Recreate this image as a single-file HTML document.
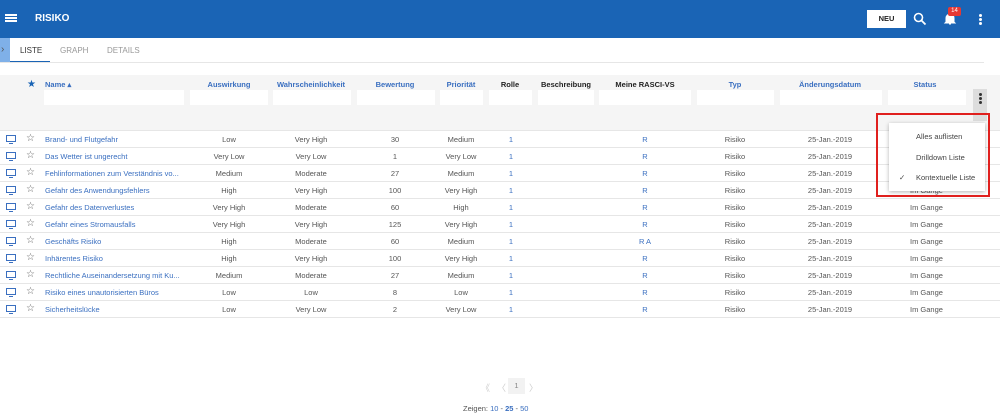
<!DOCTYPE html><html><head><style>
*{box-sizing:border-box;margin:0;padding:0}
body{width:1000px;height:417px;overflow:hidden;background:#fff;font-family:"Liberation Sans",sans-serif;font-size:7.5px;color:#555;position:relative}
.a{position:absolute}
.hdr{left:0;top:0;width:1000px;height:38px;background:#1a64b5}
.th{top:80px;font-weight:bold;font-size:7.5px;color:#3a6fc0;transform:translateX(-50%);white-space:nowrap}
.th.k{color:#222}
.in{top:90px;height:15px;background:#fff}
.row{left:0;width:1000px;height:17px;border-bottom:1px solid #e6e6e6}
.c{position:absolute;top:4px;transform:translateX(-50%);white-space:nowrap}
.b{color:#3a6fc0}
</style></head><body>
<div class="a hdr"></div>
<div class="a" style="left:5px;top:14px;width:12px;height:2px;background:#fff;box-shadow:0 3px 0 #fff,0 6px 0 #fff"></div>
<div class="a" style="left:35px;top:13px;color:#fff;font-weight:bold;font-size:10px">RISIKO</div>
<div class="a" style="left:867px;top:10px;width:39px;height:18px;background:#fff;color:#222;font-weight:bold;font-size:7.5px;text-align:center;line-height:18px">NEU</div>
<svg class="a" style="left:913px;top:12px" width="14" height="14" viewBox="0 0 14 14"><circle cx="5.5" cy="5.5" r="4" fill="none" stroke="#fff" stroke-width="1.6"/><path d="M8.5 8.5L12.5 12.5" stroke="#fff" stroke-width="1.8"/></svg>
<svg class="a" style="left:943px;top:12px" width="14" height="14" viewBox="0 0 14 14"><path d="M3 10V6a4 4 0 0 1 8 0v4l1 1H2z M6 12h2" fill="#fff" stroke="#fff"/></svg>
<div class="a" style="left:948px;top:7px;width:13px;height:9px;background:#e53935;color:#fff;font-size:6px;text-align:center;line-height:9px;border-radius:2px">14</div>
<div class="a" style="left:979px;top:14px;width:3px;height:3px;background:#fff;border-radius:50%;box-shadow:0 4px 0 #fff,0 8px 0 #fff"></div>
<div class="a" style="left:0;top:38px;width:10px;height:24px;background:#7fb0e8"></div>
<div class="a" style="left:1px;top:44px;color:#555;font-size:10px">›</div>
<div class="a" style="left:20px;top:46px;color:#333;font-size:8px">LISTE</div>
<div class="a" style="left:10px;top:61px;width:40px;height:2px;background:#1a64b5"></div>
<div class="a" style="left:60px;top:46px;color:#999;font-size:8px">GRAPH</div>
<div class="a" style="left:107px;top:46px;color:#999;font-size:8px">DETAILS</div>
<div class="a" style="left:0;top:62px;width:984px;height:1px;background:#e6e6e6"></div>
<div class="a" style="left:0;top:75px;width:1000px;height:55px;background:#f5f5f5"></div>
<div class="a" style="left:27px;top:79px;color:#1a64b5;font-size:10px">★</div>
<div class="a th" style="left:45px;transform:none">Name ▴</div>
<div class="a th" style="left:229px">Auswirkung</div>
<div class="a th" style="left:311px">Wahrscheinlichkeit</div>
<div class="a th" style="left:395px">Bewertung</div>
<div class="a th" style="left:461px">Priorität</div>
<div class="a th k" style="left:510px">Rolle</div>
<div class="a th k" style="left:566px">Beschreibung</div>
<div class="a th k" style="left:645px">Meine RASCI-VS</div>
<div class="a th" style="left:735px">Typ</div>
<div class="a th" style="left:830px">Änderungsdatum</div>
<div class="a th" style="left:925px">Status</div>
<div class="a in" style="left:44px;width:140px"></div><div class="a in" style="left:190px;width:78px"></div><div class="a in" style="left:273px;width:78px"></div><div class="a in" style="left:357px;width:78px"></div><div class="a in" style="left:440px;width:43px"></div><div class="a in" style="left:489px;width:43px"></div><div class="a in" style="left:538px;width:56px"></div><div class="a in" style="left:599px;width:92px"></div><div class="a in" style="left:697px;width:77px"></div><div class="a in" style="left:780px;width:102px"></div><div class="a in" style="left:888px;width:78px"></div>
<div class="a" style="left:973px;top:89px;width:14px;height:32px;background:#ddd"></div>
<div class="a" style="left:979px;top:93px;width:3px;height:3px;background:#333;border-radius:50%;box-shadow:0 4px 0 #333,0 8px 0 #333"></div>
<div class="a" style="left:0;top:130px;width:1000px;height:1px;background:#e6e6e6"></div>
<div id="rows"></div>
<script>
var d=[["Brand- und Flutgefahr","Low","Very High","30","Medium","R"],["Das Wetter ist ungerecht","Very Low","Very Low","1","Very Low","R"],["Fehlinformationen zum Verständnis vo...","Medium","Moderate","27","Medium","R"],["Gefahr des Anwendungsfehlers","High","Very High","100","Very High","R"],["Gefahr des Datenverlustes","Very High","Moderate","60","High","R"],["Gefahr eines Stromausfalls","Very High","Very High","125","Very High","R"],["Geschäfts Risiko","High","Moderate","60","Medium","R A"],["Inhärentes Risiko","High","Very High","100","Very High","R"],["Rechtliche Auseinandersetzung mit Ku...","Medium","Moderate","27","Medium","R"],["Risiko eines unautorisierten Büros","Low","Low","8","Low","R"],["Sicherheitslücke","Low","Very Low","2","Very Low","R"]];
var h="";d.forEach(function(r,i){var t=131+i*17;h+='<div class="a row" style="top:'+t+'px">'+
'<svg class="a" style="left:6px;top:4px" width="10" height="9" viewBox="0 0 10 9"><rect x="0.5" y="0.5" width="9" height="6" fill="none" stroke="#3a6fc0"/><path d="M3 8.5h4" stroke="#3a6fc0"/></svg>'+
'<div class="a" style="left:26px;top:2px;font-size:10px;color:#666">☆</div>'+
'<div class="a b" style="left:45px;top:4px">'+r[0]+'</div>'+
'<div class="c" style="left:229px">'+r[1]+'</div><div class="c" style="left:311px">'+r[2]+'</div><div class="c" style="left:395px">'+r[3]+'</div><div class="c" style="left:461px">'+r[4]+'</div>'+
'<div class="c b" style="left:511px">1</div><div class="c b" style="left:645px">'+r[5]+'</div><div class="c" style="left:735px">Risiko</div><div class="c" style="left:830px">25-Jan.-2019</div><div class="a" style="left:910px;top:4px">Im Gange</div></div>';});
document.getElementById("rows").innerHTML=h;
</script>
<div class="a" style="left:889px;top:123px;width:96px;height:68px;background:#fff;box-shadow:0 1px 4px rgba(0,0,0,.3);color:#444;font-size:7.5px">
<div class="a" style="left:27px;top:9px">Alles auflisten</div>
<div class="a" style="left:27px;top:30px">Drilldown Liste</div>
<div class="a" style="left:10px;top:50px">✓</div>
<div class="a" style="left:27px;top:50px">Kontextuelle Liste</div></div>
<div class="a" style="left:876px;top:113px;width:114px;height:84px;border:2px solid #e0201e"></div>
<div class="a" style="left:481px;top:381px;color:#ccc;font-size:9px">《</div>
<div class="a" style="left:497px;top:381px;color:#ccc;font-size:9px">〈</div>
<div class="a" style="left:508px;top:378px;width:17px;height:16px;background:#f2f2f2;text-align:center;line-height:16px;color:#888">1</div>
<div class="a" style="left:529px;top:381px;color:#ccc;font-size:9px">〉</div>
<div class="a" style="left:463px;top:404px;color:#555">Zeigen: <span class="b">10</span> - <b class="b">25</b> - <span class="b">50</span></div>
</body></html>
